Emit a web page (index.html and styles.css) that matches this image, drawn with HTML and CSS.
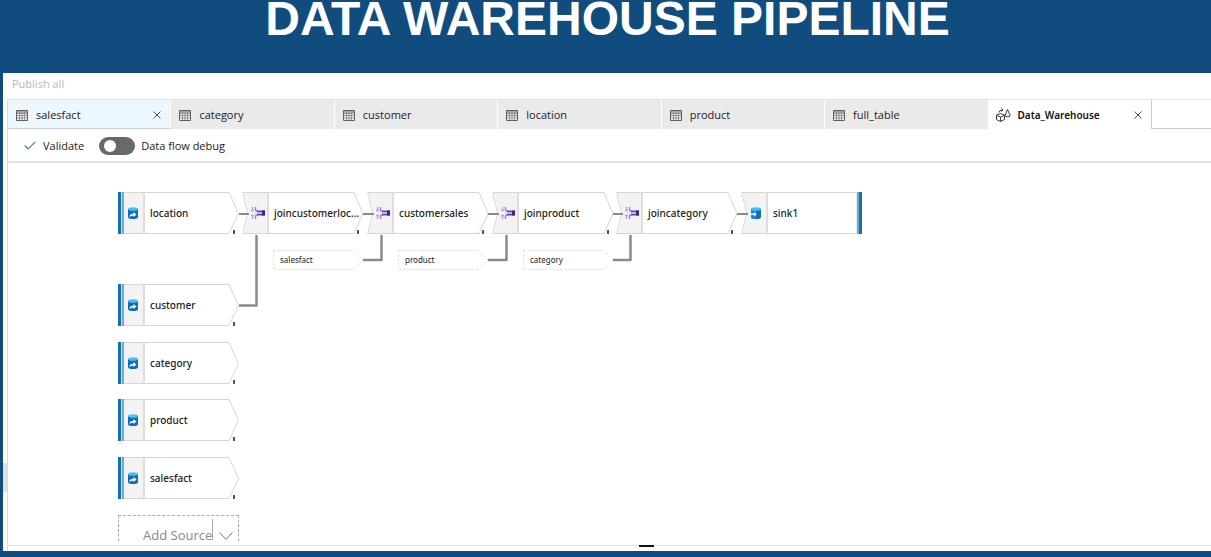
FILE: index.html
```html
<!DOCTYPE html>
<html lang="en">
<head>
<meta charset="utf-8">
<title>Data Warehouse Pipeline</title>
<link rel="stylesheet" href="styles.css">
</head>
<body>
<svg class="defs" aria-hidden="true">
  <symbol id="i-table" viewBox="0 0 12 11"><path d="M.5.5h11v10H.5z" fill="#f4f4f4" stroke="#5f5f5f"/><path d="M1 1h10v2H1z" fill="#a5a5a5"/><path d="M1 3.500h10M1 5.500h10M1 8h10M3.500 3v7M6 3v7M8.500 3v7" fill="none" stroke="#7d8082" stroke-width=".8"/></symbol>
  <symbol id="i-close" viewBox="0 0 8 8"><path d="M.5.5l7 7M7.500.5l-7 7" fill="none" stroke="#4c4c4c"/></symbol>
  <symbol id="i-flow" viewBox="0 0 15 14"><path d="M4.500 5.500l4 1.700v4.300l-4 2-4-2V7.200zM.5 7.200l4 1.800 4-1.800M4.500 9v4.500M11.500 1.500L8.800 8q2.800 1.700 5.500 0zM3 4.500Q3.200 2 6.500 2M5.300.3L7 2 5.300 3.700" fill="none" stroke="#3c3c3c"/></symbol>
  <symbol id="i-source" viewBox="0 0 10 12"><path d="M0 2v8q0 2 5 2t5-2V2z" fill="#0f6cbd"/><ellipse cx="5" cy="2" rx="5" ry="1.800" fill="#45c3ee"/><path d="M1.500 10q0-3.300 4-3.300V5l3 2.500-3 2.500V8.500Q3 8.500 1.500 10z" fill="#fff"/></symbol>
  <symbol id="i-sink" viewBox="0 0 10 12"><path d="M0 2v8q0 2 5 2t5-2V2z" fill="#0f6cbd"/><path d="M0 3v7q0 2 5 2V3z" fill="#1689dc"/><ellipse cx="5" cy="2" rx="5" ry="1.800" fill="#45c3ee"/><path d="M0 6.500h3V5l3 2.300-3 2.300V8H0z" fill="#e6f6ff"/></symbol>
  <symbol id="i-join" viewBox="0 0 14 12"><path d="M1.500 0v3.500M1.500 12V8.500M0 3.500h3M0 8.500h3" fill="none" stroke="#b9a0e6" stroke-width="1.300"/><path d="M4.500 0v2.500q0 1.500 2 1.500M4.500 12V9.500Q4.500 8 6.500 8" fill="none" stroke="#9a7bd6" stroke-width="1.400"/><path d="M6 3.500h8v5H6z" fill="#6a3fb5"/><path d="M11 3.500h3v5h-3z" fill="#432085"/><path d="M3 6h8" stroke="#e2d8f5" stroke-width="1.500"/></symbol>
  <symbol id="s-source" viewBox="0 0 122 44"><path d="M6 1.500h105l9.500 21-9.500 20H6z" fill="#fff" stroke="#d6d6d6"/><path d="M6 2h20v40H6z" fill="#f3f3f3"/><path d="M26 1v42" stroke="#dedede" stroke-width="2"/><path d="M0 1h3v42H0z" fill="#1470b0"/><path d="M3 1h3v42H3z" fill="#6caad6"/><path d="M3 1h1v42H3z" fill="#c4dff1"/><path d="M115 39h2v4h-2z" fill="#555"/></symbol>
  <symbol id="s-join" viewBox="0 0 122 44"><path d="M.7 1.500H112l9 21-9 20H.7l5-20z" fill="#fff" stroke="#d6d6d6"/><path d="M1.500 2H26v40H1.500l5-19.500z" fill="#f3f3f3"/><path d="M26 1v42" stroke="#dedede" stroke-width="2"/><path d="M115 39h2v4h-2z" fill="#555"/></symbol>
  <symbol id="s-sink" viewBox="0 0 122 44"><path d="M.7 1.500H116v41H.7l5-20z" fill="#fff" stroke="#d6d6d6"/><path d="M1.500 2H26v40H1.500l5-19.500z" fill="#f3f3f3"/><path d="M26 1v42" stroke="#dedede" stroke-width="2"/><path d="M116 1h2v42h-2z" fill="#6caad6"/><path d="M118 1h3v42h-3z" fill="#1470b0"/></symbol>
  <symbol id="s-ref" viewBox="0 0 91 20"><path d="M.5.5H81l9 9.500-9 9.500H.5z" fill="#fff" stroke="#d9d9d9" stroke-dasharray="2 2"/></symbol>
</svg>

<header class="banner"><h1 class="banner-title">DATA WAREHOUSE PIPELINE</h1></header>

<main class="app">
  <div class="publish-bar"><button class="publish" disabled>Publish all</button></div>
  <div class="workspace">
    <nav class="tab-strip">
      <div class="tabs">
        <div class="tab tab-hot"><button class="tab-main"><svg class="tab-icon"><use href="#i-table"/></svg>salesfact</button><button class="tab-close" aria-label="Close salesfact"><svg class="close-icon"><use href="#i-close"/></svg></button></div>
        <div class="tab"><button class="tab-main"><svg class="tab-icon"><use href="#i-table"/></svg>category</button></div>
        <div class="tab"><button class="tab-main"><svg class="tab-icon"><use href="#i-table"/></svg>customer</button></div>
        <div class="tab"><button class="tab-main"><svg class="tab-icon"><use href="#i-table"/></svg>location</button></div>
        <div class="tab"><button class="tab-main"><svg class="tab-icon"><use href="#i-table"/></svg>product</button></div>
        <div class="tab"><button class="tab-main"><svg class="tab-icon"><use href="#i-table"/></svg>full_table</button></div>
        <div class="tab tab-active"><button class="tab-main"><svg class="flow-icon"><use href="#i-flow"/></svg>Data_Warehouse</button><button class="tab-close" aria-label="Close Data_Warehouse"><svg class="close-icon"><use href="#i-close"/></svg></button></div>
      </div>
      <div class="tab-rest"></div>
    </nav>
    <div class="toolbar">
      <button class="validate"><svg class="check-icon" viewBox="0 0 12 9"><path d="M.7 4.500L4.200 8 11.300.8" fill="none" stroke="#3f83b8" stroke-width="1.200"/></svg>Validate</button>
      <label class="debug"><input class="switch" type="checkbox" role="switch">Data flow debug</label>
    </div>
    <div class="canvas">
      <svg class="wires" aria-hidden="true"><g fill="none" stroke="#8a8a8a" stroke-width="2.500" stroke-linejoin="round"><path d="M231 142.500h17.500V72M355 97h18.500V72M480 97h18.500V72M605 97h17.500V72"/></g></svg>
      <div class="node" style="left:110px;top:28px"><svg class="shape"><use href="#s-source"/></svg><svg class="store"><use href="#i-source"/></svg><span class="name">location</span></div>
      <div class="node" style="left:234px;top:28px"><svg class="shape"><use href="#s-join"/></svg><svg class="join"><use href="#i-join"/></svg><span class="name">joincustomerloc...</span></div>
      <div class="node" style="left:359px;top:28px"><svg class="shape"><use href="#s-join"/></svg><svg class="join"><use href="#i-join"/></svg><span class="name">customersales</span></div>
      <div class="node" style="left:484px;top:28px"><svg class="shape"><use href="#s-join"/></svg><svg class="join"><use href="#i-join"/></svg><span class="name">joinproduct</span></div>
      <div class="node" style="left:608px;top:28px"><svg class="shape"><use href="#s-join"/></svg><svg class="join"><use href="#i-join"/></svg><span class="name">joincategory</span></div>
      <div class="node" style="left:733px;top:28px"><svg class="shape"><use href="#s-sink"/></svg><svg class="store"><use href="#i-sink"/></svg><span class="name">sink1</span></div>
      <svg class="wires" aria-hidden="true"><path d="M231 51h10M355 51h11M480 51h11M605 51h10M729 51h11" fill="none" stroke="#8a8a8a" stroke-width="2"/></svg>
      <div class="ref" style="left:265px;top:87px"><svg class="ref-shape"><use href="#s-ref"/></svg><span class="ref-name">salesfact</span></div>
      <div class="ref" style="left:390px;top:87px"><svg class="ref-shape"><use href="#s-ref"/></svg><span class="ref-name">product</span></div>
      <div class="ref" style="left:515px;top:87px"><svg class="ref-shape"><use href="#s-ref"/></svg><span class="ref-name">category</span></div>
      <div class="node" style="left:110px;top:120px"><svg class="shape"><use href="#s-source"/></svg><svg class="store"><use href="#i-source"/></svg><span class="name">customer</span></div>
      <div class="node" style="left:110px;top:178px"><svg class="shape"><use href="#s-source"/></svg><svg class="store"><use href="#i-source"/></svg><span class="name">category</span></div>
      <div class="node" style="left:110px;top:235px"><svg class="shape"><use href="#s-source"/></svg><svg class="store"><use href="#i-source"/></svg><span class="name">product</span></div>
      <div class="node" style="left:110px;top:293px"><svg class="shape"><use href="#s-source"/></svg><svg class="store"><use href="#i-source"/></svg><span class="name">salesfact</span></div>
      <button class="add-source" style="left:110px;top:352px"><span class="add-label">Add Source</span><span class="add-divider"></span><svg class="chevron" viewBox="0 0 14 8"><path d="M.5.5L7 7.300 13.500.5" fill="none" stroke="#777"/></svg></button>
    </div>
    <div class="splitter"><span class="grip"></span></div>
  </div>
  <div class="side-handle"></div>
</main>
</body>
</html>
```
FILE: styles.css
```css
* { box-sizing: border-box; }
body {
  margin: 0;
  min-height: 100vh;
  display: flex;
  flex-direction: column;
  background: #114c7e;
  font: 11px/16px "Open Sans", "Noto Sans", sans-serif;
  color: #222;
}
button { border: 0; padding: 0; background: none; font: inherit; color: inherit; }
.defs { position: absolute; width: 0; height: 0; }
.banner { height: 73px; padding-left: 4px; text-align: center; }
.banner-title { margin: 0; color: #fff; font: bold 48px/38px "Liberation Sans", Arial, sans-serif; }

.app {
  position: relative;
  flex: 1;
  display: flex;
  flex-direction: column;
  margin: 0 0 6px 3px;
  background: #fff;
}
.publish-bar { display: flex; align-items: center; height: 26px; padding: 0 9px 4px; }
.publish { color: #b8b8b8; }
.workspace { flex: 1; display: flex; flex-direction: column; margin-left: 4px; border-left: 1px solid #dcdcdc; }

.tab-strip { display: flex; height: 30px; border-top: 1px solid #e2e2e2; }
.tabs { flex: 0 1 1144px; display: flex; min-width: 0; }
.tab { flex: 1 1 0; display: flex; align-items: center; justify-content: space-between; min-width: 0; padding: 1px 9px 0 8px; background: #eaeaea; border-right: 1px solid #fff; }
.tab-hot { background: #edf7ff; box-shadow: inset 0 -1px #c4d3de; }
.tab-active { background: #fff; border-right-color: #ccc; font-family: "Noto Sans", sans-serif; font-weight: 600; font-size: 10px; color: #111; }
.tab-main { display: flex; align-items: center; gap: 8px; white-space: nowrap; }
.tab-icon { width: 12px; height: 11px; }
.flow-icon { width: 15px; height: 14px; margin: 0 -1px; }
.tab-close { display: flex; }
.close-icon { width: 8px; height: 8px; }
.tab-rest { flex: 1; border-bottom: 1px solid #ccc; }

.toolbar { display: flex; align-items: center; gap: 15px; height: 34px; padding: 1px 0 0 16px; border-bottom: 2px solid #e4e4e4; }
.validate, .debug { display: flex; align-items: center; white-space: nowrap; }
.validate { gap: 7px; }
.debug { gap: 6px; }
.check-icon { width: 12px; height: 9px; }
.switch { appearance: none; width: 36px; height: 18px; margin: 0; padding: 3px 5px; border-radius: 9px; background: #696969; }
.switch::before { content: ""; display: block; width: 12px; height: 12px; border-radius: 50%; background: #fff; }
.switch:checked::before { margin-left: auto; }

.canvas { position: relative; flex: 1; min-height: 382px; overflow: hidden; }
.wires { position: absolute; inset: 0; width: 100%; height: 100%; }
.node { position: absolute; display: flex; align-items: center; width: 122px; height: 44px; padding-left: 10px; }
.shape, .ref-shape { position: absolute; inset: 0; width: 100%; height: 100%; }
.store, .join, .name, .ref-name { position: relative; }
.store { flex: none; width: 10px; height: 12px; }
.join { flex: none; width: 14px; height: 12px; margin: 0 -3px 0 -1px; }
.name { margin-left: 12px; white-space: nowrap; font: 500 10px/16px "Noto Sans", sans-serif; }
.ref { position: absolute; display: flex; align-items: center; width: 91px; height: 20px; padding-left: 7px; }
.ref-name { font: 8px/12px "Noto Sans", sans-serif; }
.add-source { position: absolute; display: flex; align-items: flex-start; width: 121px; height: 26px; padding: 3px 5px 0 24px; border: 1px dashed #aaa; border-bottom: 0; color: #888; font-size: 13px; }
.add-label { padding-top: 8px; white-space: nowrap; }
.add-divider { width: 1px; height: 21px; background: #aaa; }
.chevron { width: 14px; height: 8px; margin: 13px 0 0 auto; }
.splitter { display: flex; justify-content: center; height: 6px; padding-left: 74px; border-top: 1px solid #e0e0e0; }
.grip { width: 15px; height: 2px; margin-top: -1px; background: #111; }
.side-handle { position: absolute; left: 0; top: 390px; width: 4px; height: 29px; background: #dde0e6; }
```
